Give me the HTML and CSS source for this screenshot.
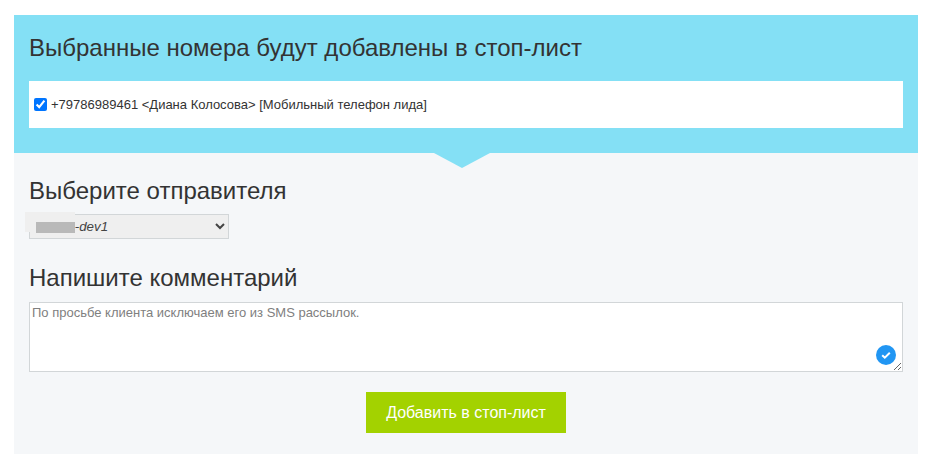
FILE: index.html
```html
<!DOCTYPE html>
<html lang="ru">
<head>
<meta charset="utf-8">
<title>Стоп-лист</title>
<link rel="stylesheet" href="styles.css">
</head>
<body>
<main class="panel">
  <section class="head">
    <h2 class="title title-top">Выбранные номера будут добавлены в стоп-лист</h2>
    <div class="numbers">
      <label class="number"><input class="check" type="checkbox" checked><span>+79786989461 &lt;Диана Колосова&gt; [Мобильный телефон лида]</span></label>
    </div>
    <div class="arrow"></div>
  </section>
  <section class="body">
    <h2 class="title title-sender">Выберите отправителя</h2>
    <div class="select-wrap">
      <select class="sender"><option>&nbsp;&nbsp;&nbsp;&nbsp;&nbsp;&nbsp;&nbsp;&nbsp;&nbsp;&nbsp;&nbsp;-dev1</option></select>
      <div class="mask-light"></div>
      <div class="mask-dark"></div>
    </div>
    <h2 class="title title-comment">Напишите комментарий</h2>
    <div class="comment-wrap">
      <textarea class="comment" placeholder="По просьбе клиента исключаем его из SMS рассылок."></textarea>
      <svg class="badge" viewBox="0 0 20 20" width="20" height="20" aria-hidden="true">
        <circle cx="10" cy="10" r="10" fill="#2196f3"/>
        <path d="M6.2 10.2l2.6 2.5 5-5" fill="none" stroke="#fff" stroke-width="2"/>
      </svg>
    </div>
    <div class="actions"><button class="submit" type="button">Добавить в стоп-лист</button></div>
  </section>
</main>
</body>
</html>
```
FILE: styles.css
```css
* { box-sizing: border-box; }
html, body { margin: 0; padding: 0; background: #fff; }
body {
  padding: 15px 13px 13px 14px;
  font-family: "Liberation Sans", Arial, sans-serif;
  color: #333;
}
.panel { background: #f5f7f9; height: 439px; }
.head {
  position: relative;
  background: #84e0f5;
  height: 138px;
  padding: 0 15px;
}
.title { margin: 0; font-weight: 400; font-size: 24px; line-height: 30px; color: #333; }
.title-top { padding-top: 18px; }
.numbers {
  margin-top: 18px;
  background: #fff;
  height: 47px;
  padding: 0 5px;
  display: flex;
  align-items: center;
}
.number { display: flex; align-items: center; font-size: 13px; line-height: 16px; color: #333; }
.check { width: 13px; height: 13px; margin: 0 4px 0 0; accent-color: #0075ff; }
.arrow {
  position: absolute;
  left: 420px;
  top: 138px;
  width: 0;
  height: 0;
  border-left: 28px solid transparent;
  border-right: 28px solid transparent;
  border-top: 15px solid #84e0f5;
}
.body { padding: 0 15px; }
.title-sender { padding-top: 23px; }
.select-wrap { position: relative; width: 200px; margin-top: 8px; }
.sender {
  display: block;
  width: 200px;
  height: 25px;
  font-family: "Liberation Sans", Arial, sans-serif;
  font-size: 13.33px;
  font-style: italic;
  color: #444;
  background: #efefef;
  border: 1px solid #d2d6d8;
  border-radius: 0;
  padding: 0;
}
.mask-light { position: absolute; left: -4px; top: -2px; width: 50px; height: 20px; background: #efefef; }
.mask-dark { position: absolute; left: 7px; top: 8px; width: 39px; height: 11px; background: #b9b9b9; }
.title-comment { padding-top: 24px; }
.comment-wrap { position: relative; margin-top: 9px; }
.comment {
  display: block;
  width: 874px;
  height: 70px;
  background: #fff;
  border: 1px solid #d2d6d8;
  border-radius: 0;
  padding: 2px;
  font-family: "Liberation Sans", Arial, sans-serif;
  font-size: 13px;
  line-height: 15px;
  color: #333;
}
.comment::placeholder { color: #808080; opacity: 1; }
.badge { position: absolute; right: 7px; bottom: 7px; }
.actions { display: flex; justify-content: center; margin-top: 20px; }
.submit {
  width: 200px;
  height: 41px;
  background: #a3d200;
  color: #fff;
  border: 0;
  border-radius: 0;
  padding: 0;
  font-family: "Liberation Sans", Arial, sans-serif;
  font-size: 16px;
}
```
